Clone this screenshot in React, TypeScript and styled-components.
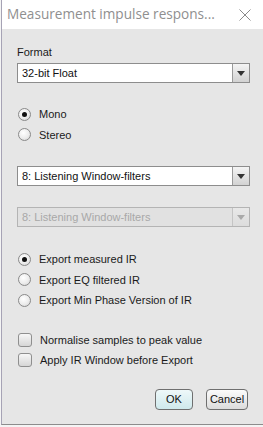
import React from "react";
import styled, { createGlobalStyle } from "styled-components";

const GlobalStyle = createGlobalStyle`
  html, body {
    margin: 0;
    padding: 0;
    background: #ffffff;
  }
  body {
    font-family: "Liberation Sans", Arial, sans-serif;
  }
`;

const Frame = styled.div`
  width: 263px;
  height: 427px;
  overflow: hidden;
  background: #f4f4f4;
  padding-left: 1px;
  box-sizing: border-box;
`;

const Window = styled.div`
  width: 262px;
  height: 425px;
  border-left: 1px solid #a6a3b5;
  border-bottom: 1px solid #8c8c8c;
  box-sizing: border-box;
  background: #e6e6e6;
  display: flex;
  flex-direction: column;
`;

const TitleBar = styled.div`
  height: 29px;
  background: #ffffff;
  display: flex;
  align-items: center;
  justify-content: space-between;
  padding: 0 12px 0 5px;
  flex-shrink: 0;
`;

const Title = styled.span`
  font-family: "Open Sans", "Noto Sans", sans-serif;
  font-size: 13.6px;
  color: #8f8f8f;
  white-space: nowrap;
  margin-top: -3px;
`;

const Body = styled.div`
  display: flex;
  flex-direction: column;
  padding: 16px 13px 0 15px;
  flex: 1;
`;

const Label = styled.div`
  font-size: 11px;
  line-height: 14px;
  color: #1a1a1a;
  margin-bottom: 4px;
`;

const Combo = styled.div<{ $disabled?: boolean; $gap?: number }>`
  height: 20px;
  box-sizing: border-box;
  border: 1px solid ${(p) => (p.$disabled ? "#b4b4b4" : "#8d8d8d")};
  background: ${(p) => (p.$disabled ? "#e1e1e1" : "#ffffff")};
  display: flex;
  margin-top: ${(p) => p.$gap ?? 0}px;
`;

const ComboText = styled.div<{ $disabled?: boolean }>`
  flex: 1;
  font-size: 11px;
  line-height: 18px;
  padding-left: 4px;
  color: ${(p) => (p.$disabled ? "#a8a8a8" : "#111111")};
  white-space: nowrap;
  overflow: hidden;
`;

const ArrowButton = styled.div<{ $disabled?: boolean }>`
  width: 16px;
  border-left: 1px solid ${(p) => (p.$disabled ? "#c4c4c4" : "#9a9a9a")};
  background: ${(p) =>
    p.$disabled
      ? "linear-gradient(#e8e8e8, #dcdcdc)"
      : "linear-gradient(#f4f4f4, #d2d2d2)"};
  display: flex;
  align-items: center;
  justify-content: center;
`;

const Arrow = styled.div<{ $disabled?: boolean }>`
  width: 0;
  height: 0;
  border-left: 4px solid transparent;
  border-right: 4px solid transparent;
  border-top: 5px solid ${(p) => (p.$disabled ? "#a9a9a9" : "#333333")};
  margin-top: 1px;
`;

const Group = styled.div<{ $gap: number }>`
  display: flex;
  flex-direction: column;
  margin-top: ${(p) => p.$gap}px;
`;

const OptionRow = styled.div`
  height: 20.5px;
  display: flex;
  align-items: center;
  gap: 8px;
  padding-left: 1px;
  font-size: 11px;
  color: #1a1a1a;
`;

const RadioCircle = styled.div<{ $checked?: boolean }>`
  width: 13px;
  height: 13px;
  box-sizing: border-box;
  border-radius: 50%;
  border: 1px solid #8a8a8a;
  background: radial-gradient(circle at 40% 35%, #ffffff 0%, #ececec 55%, #cfcfcf 100%);
  display: flex;
  align-items: center;
  justify-content: center;

  &::after {
    content: "";
    display: ${(p) => (p.$checked ? "block" : "none")};
    width: 5px;
    height: 5px;
    border-radius: 50%;
    background: #111111;
  }
`;

const CheckSquare = styled.div`
  width: 14px;
  height: 14px;
  box-sizing: border-box;
  border-radius: 3px;
  border: 1px solid #8f8f8f;
  background: linear-gradient(#f7f7f7, #d6d6d6);
`;

const Footer = styled.div`
  display: flex;
  justify-content: flex-end;
  gap: 13px;
  margin-top: 18px;
  padding-right: 2px;
`;

const Button = styled.button<{ $primary?: boolean; $width: number }>`
  width: ${(p) => p.$width}px;
  height: 21px;
  padding: 0;
  border: 1px solid #6f6f6f;
  border-radius: 4px;
  background: ${(p) =>
    p.$primary
      ? "linear-gradient(#eef8f9, #cfe9ec)"
      : "linear-gradient(#fbfbfb, #dcdcdc)"};
  font-family: "Liberation Sans", Arial, sans-serif;
  font-size: 11px;
  color: #111111;
`;

const Radio: React.FC<{ checked?: boolean; label: string }> = ({ checked, label }) => (
  <OptionRow>
    <RadioCircle $checked={checked} />
    <span>{label}</span>
  </OptionRow>
);

const Check: React.FC<{ label: string }> = ({ label }) => (
  <OptionRow>
    <CheckSquare />
    <span>{label}</span>
  </OptionRow>
);

const Select: React.FC<{ value: string; disabled?: boolean; gap?: number }> = ({
  value,
  disabled,
  gap,
}) => (
  <Combo $disabled={disabled} $gap={gap}>
    <ComboText $disabled={disabled}>{value}</ComboText>
    <ArrowButton $disabled={disabled}>
      <Arrow $disabled={disabled} />
    </ArrowButton>
  </Combo>
);

export default function App() {
  return (
    <>
      <GlobalStyle />
      <Frame>
        <Window>
          <TitleBar>
            <Title>Measurement impulse respons...</Title>
            <svg width="12" height="12" viewBox="0 0 12 12">
              <path d="M0.5 0.5 L11.5 11.5 M11.5 0.5 L0.5 11.5" stroke="#8a8a8a" strokeWidth="1" />
            </svg>
          </TitleBar>
          <Body>
            <Label>Format</Label>
            <Select value="32-bit Float" />
            <Group $gap={21}>
              <Radio checked label="Mono" />
              <Radio label="Stereo" />
            </Group>
            <Select value="8: Listening Window-filters" gap={21} />
            <Select value="8: Listening Window-filters" disabled gap={21} />
            <Group $gap={22}>
              <Radio checked label="Export measured IR" />
              <Radio label="Export EQ filtered IR" />
              <Radio label="Export Min Phase Version of IR" />
            </Group>
            <Group $gap={19}>
              <Check label="Normalise samples to peak value" />
              <Check label="Apply IR Window before Export" />
            </Group>
            <Footer>
              <Button $primary $width={38}>OK</Button>
              <Button $width={42}>Cancel</Button>
            </Footer>
          </Body>
        </Window>
      </Frame>
    </>
  );
}
